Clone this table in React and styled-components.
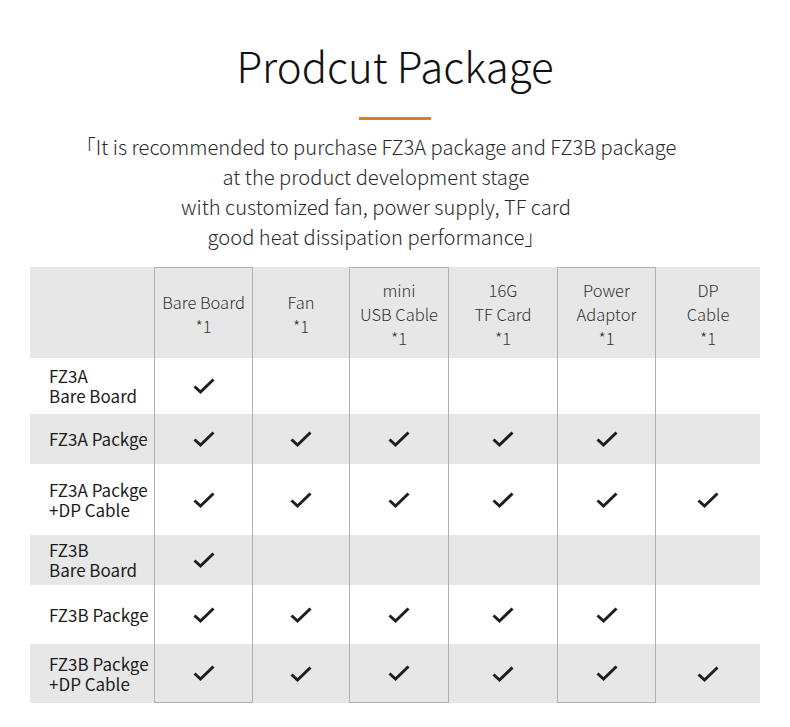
import React from 'react';
import styled, { createGlobalStyle } from 'styled-components';

const GlobalStyle = createGlobalStyle`
  body {
    margin: 0;
    background: #ffffff;
    font-family: "Noto Sans CJK SC", "Noto Sans", sans-serif;
  }
`;

const columns = [
  { title: ['Bare Board', '*1'], width: 99, outlined: true },
  { title: ['Fan', '*1'], width: 96 },
  { title: ['mini', 'USB Cable', '*1'], width: 100, outlined: true },
  { title: ['16G', 'TF Card', '*1'], width: 108 },
  { title: ['Power', 'Adaptor', '*1'], width: 99, outlined: true },
  { title: ['DP', 'Cable', '*1'], width: 104 },
];

const rows = [
  { label: ['FZ3A', 'Bare Board'], checks: [1, 0, 0, 0, 0, 0], height: 56 },
  { label: ['FZ3A Packge'], checks: [1, 1, 1, 1, 1, 0], height: 50, shade: true },
  { label: ['FZ3A Packge', '+DP Cable'], checks: [1, 1, 1, 1, 1, 1], height: 71 },
  { label: ['FZ3B', 'Bare Board'], checks: [1, 0, 0, 0, 0, 0], height: 50, shade: true },
  { label: ['FZ3B Packge'], checks: [1, 1, 1, 1, 1, 0], height: 59 },
  { label: ['FZ3B Packge', '+DP Cable'], checks: [1, 1, 1, 1, 1, 1], height: 59, shade: true },
];

// lines joined with <br/> so each cell is one text block
const lines = arr =>
  arr.map((t, i) => (
    <React.Fragment key={i}>
      {i > 0 && <br />}
      {t}
    </React.Fragment>
  ));

function Check() {
  return (
    <svg width="24" height="18" viewBox="0 0 24 18">
      <path d="M2.5 9.5 L8.5 15 L21.5 2.5" fill="none" stroke="#1e1e1e" strokeWidth="3" strokeLinejoin="miter" />
    </svg>
  );
}

function App() {
  return (
    <Page>
      <GlobalStyle />
      <Title>Prodcut Package</Title>
      <Accent />
      <Intro>
        「It is recommended to purchase FZ3A package and FZ3B package
        <br />at the product development stage
        <br />with customized fan, power supply, TF card
        <br />good heat dissipation performance」
      </Intro>
      <Table $cols={columns.map(c => c.width + 'px').join(' ')} $rows={rows.map(r => r.height + 'px').join(' ')}>
        <HeadCell />
        {columns.map((c, i) => (
          <HeadCell key={'h' + i} $outlined={c.outlined}>
            <span>{lines(c.title)}</span>
          </HeadCell>
        ))}
        {rows.map((r, ri) => (
          <React.Fragment key={ri}>
            <LabelCell $shade={r.shade}>
              <span>{lines(r.label)}</span>
            </LabelCell>
            {r.checks.map((on, ci) => (
              <Cell
                key={ci}
                $shade={r.shade}
                $outlined={columns[ci].outlined}
                $bottom={ri === rows.length - 1}
              >
                {on ? <Check /> : null}
              </Cell>
            ))}
          </React.Fragment>
        ))}
      </Table>
    </Page>
  );
}

const Page = styled.div`
  width: 790px;
  display: flex;
  flex-direction: column;
  align-items: center;
  padding-top: 35px;
`;

const Title = styled.h1`
  margin: 0;
  font-size: 42px;
  line-height: 60px;
  font-weight: 300;
  color: #111;
`;

const Accent = styled.div`
  width: 72px;
  height: 3px;
  background: #df7d22;
  margin-top: 22px;
`;

const Intro = styled.p`
  margin: 12px 38px 0 0;
  font-size: 20.15px;
  line-height: 30px;
  font-weight: 300;
  color: #2a2a2a;
  text-align: center;
`;

const Table = styled.div`
  margin-top: 15px;
  display: grid;
  grid-template-columns: 124px ${p => p.$cols};
  grid-template-rows: 91px ${p => p.$rows};
  width: 730px;
`;

const BaseCell = styled.div`
  box-sizing: border-box;
  background: ${p => (p.$shade ? '#e7e7e7' : '#ffffff')};
  border-left: ${p => (p.$outlined ? '1px solid #b0b0b0' : 'none')};
  border-right: ${p => (p.$outlined ? '1px solid #b0b0b0' : 'none')};
`;

const HeadCell = styled(BaseCell)`
  background: #e7e7e7;
  border-top: ${p => (p.$outlined ? '1px solid #b0b0b0' : 'none')};
  display: flex;
  align-items: center;
  justify-content: center;
  font-size: 16.5px;
  line-height: 24px;
  font-weight: 300;
  color: #333;
  text-align: center;
  padding-top: 2px;
`;

const LabelCell = styled(BaseCell)`
  display: flex;
  align-items: center;
  padding-left: 19px;
  font-size: 17px;
  line-height: 20px;
  color: #1c1c1c;
`;

const Cell = styled(BaseCell)`
  display: flex;
  align-items: center;
  justify-content: center;
  border-bottom: ${p => (p.$outlined && p.$bottom ? '1px solid #b0b0b0' : 'none')};
`;

export default App;
